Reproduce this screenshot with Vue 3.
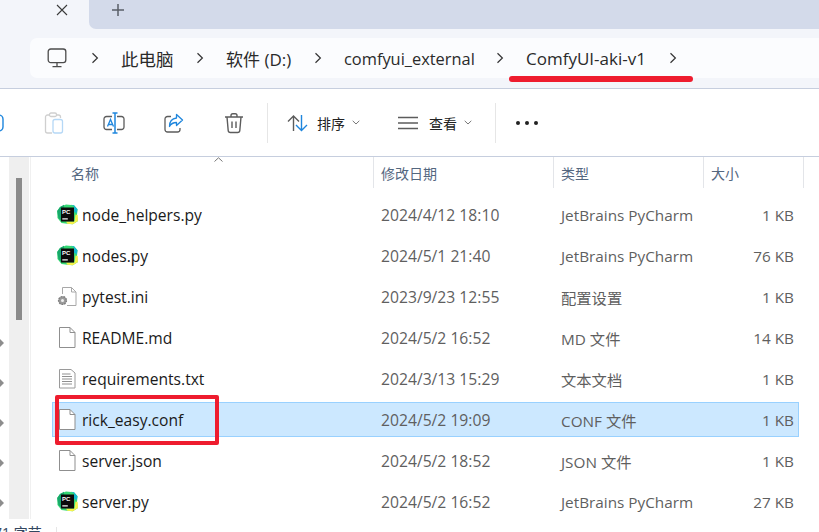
<script setup>
const crumbs = [
  { label: '此电脑', width: 105, size: 17.5 },
  { label: '软件 (D:)', width: 118, size: 17 },
  { label: 'comfyui_external', width: 182, size: 16.4 },
  { label: 'ComfyUI-aki-v1', width: 173, size: 17 },
]
const files = [
  { name: 'node_helpers.py', date: '2024/4/12 18:10', type: 'JetBrains PyCharm', size: '1 KB', icon: 'pc' },
  { name: 'nodes.py', date: '2024/5/1 21:40', type: 'JetBrains PyCharm', size: '76 KB', icon: 'pc' },
  { name: 'pytest.ini', date: '2023/9/23 12:55', type: '配置设置', size: '1 KB', icon: 'ini' },
  { name: 'README.md', date: '2024/5/2 16:52', type: 'MD 文件', size: '14 KB', icon: 'blank' },
  { name: 'requirements.txt', date: '2024/3/13 15:29', type: '文本文档', size: '1 KB', icon: 'txt' },
  { name: 'rick_easy.conf', date: '2024/5/2 19:09', type: 'CONF 文件', size: '1 KB', icon: 'blank', selected: true },
  { name: 'server.json', date: '2024/5/2 18:52', type: 'JSON 文件', size: '1 KB', icon: 'blank' },
  { name: 'server.py', date: '2024/5/2 16:52', type: 'JetBrains PyCharm', size: '27 KB', icon: 'pc' },
]
const columns = [
  { label: '名称', width: 343 },
  { label: '修改日期', width: 180 },
  { label: '类型', width: 150 },
  { label: '大小', width: 100 },
]
const arrows = [0, 1, 2, 3, 4]
</script>

<template>
  <div class="window">
    <div class="tabs">
      <div class="tab-active">
        <svg class="tab-close" width="12" height="12" viewBox="0 0 12 12"><path d="M1 1l10 10M11 1L1 11" stroke="#3a3a3a" stroke-width="1.1" fill="none" /></svg>
      </div>
      <div class="tab-strip">
        <svg class="tab-new" width="14" height="14" viewBox="0 0 14 14"><path d="M7 1v12M1 7h12" stroke="#5a5f68" stroke-width="1.5" fill="none" /></svg>
      </div>
    </div>

    <div class="address-zone">
      <div class="address">
        <svg class="pc-icon" width="20" height="20" viewBox="0 0 20 20" fill="none" stroke="#4c4c4c" stroke-width="1.3">
          <rect x="1.2" y="1" width="17.6" height="13.6" rx="2.6" />
          <path d="M10 14.6v3.6M5.5 18.6h9" />
        </svg>
        <svg class="chev first" width="8" height="12" viewBox="0 0 8 12"><path d="M1.5 1.2L6.4 6l-4.9 4.8" stroke="#333" stroke-width="1.2" fill="none" /></svg>
        <template v-for="c in crumbs" :key="c.label">
          <span class="crumb" :style="{ width: c.width + 'px' }">
            <span class="crumb-text" :style="{ fontSize: c.size + 'px' }">{{ c.label }}</span>
            <svg class="chev" width="8" height="12" viewBox="0 0 8 12"><path d="M1.5 1.2L6.4 6l-4.9 4.8" stroke="#333" stroke-width="1.2" fill="none" /></svg>
          </span>
        </template>
      </div>
    </div>

    <div class="toolbar">
      <div class="tool">
        <svg width="20" height="20" viewBox="0 0 20 20" fill="none"><rect x="3" y="2" width="16" height="16" rx="4" stroke="#1f86dd" stroke-width="1.4" /></svg>
      </div>
      <div class="tool">
        <svg width="20" height="22" viewBox="0 0 20 22" fill="none">
          <path d="M6 3H3.5A2 2 0 0 0 1.500 5v14a2 2 0 0 0 2 2H8" stroke="#cfcfcf" stroke-width="1.3" />
          <path d="M12 3h2.500a2 2 0 0 1 2 2v1" stroke="#cfcfcf" stroke-width="1.300" />
          <rect x="5.500" y="1" width="7" height="3.500" rx="1.500" stroke="#cfcfcf" stroke-width="1.300" />
          <rect x="9" y="7.500" width="9.500" height="13.500" rx="2" stroke="#b5d8f6" stroke-width="1.300" />
        </svg>
      </div>
      <div class="tool">
        <svg width="22" height="22" viewBox="0 0 22 22" fill="none">
          <path d="M9 4.500H3.500a2.500 2.500 0 0 0-2.500 2.500v8a2.500 2.500 0 0 0 2.500 2.500H9M14 4.500h4.500A2.500 2.500 0 0 1 21 7v8a2.500 2.500 0 0 1-2.500 2.500H14" stroke="#5c5c5c" stroke-width="1.300" />
          <path d="M4.500 14.500L7.500 7.500l3 7M5.500 12.500h4" stroke="#1f86dd" stroke-width="1.300" />
          <path d="M12 1v20M9.500 1h5M9.500 21h5" stroke="#1f86dd" stroke-width="1.500" />
        </svg>
      </div>
      <div class="tool">
        <svg width="20" height="20" viewBox="0 0 20 20" fill="none">
          <path d="M7 3.500H3.500A2.500 2.500 0 0 0 1 6v10.500A2.500 2.500 0 0 0 3.500 19h10a2.500 2.500 0 0 0 2.500-2.500V15" stroke="#5c5c5c" stroke-width="1.300" />
          <path d="M12.500 1.500L18.500 7l-6 5.500V9.500c-3 0-5.500 1-7 4 0-4.500 2.500-8 7-8.500z" stroke="#1f86dd" stroke-width="1.300" stroke-linejoin="round" />
        </svg>
      </div>
      <div class="tool">
        <svg width="20" height="22" viewBox="0 0 20 22" fill="none" stroke="#5c5c5c" stroke-width="1.400">
          <path d="M1 5h18M7 5V3.500A1.800 1.800 0 0 1 8.800 1.700h2.400A1.800 1.800 0 0 1 13 3.500V5" />
          <path d="M3 5l1.200 13.500a2.200 2.200 0 0 0 2.200 2h7.200a2.200 2.200 0 0 0 2.200-2L17 5" />
          <path d="M8 9.500v6.500M12 9.500v6.500" />
        </svg>
      </div>
      <div class="tool-sep"></div>
      <div class="tool-menu sort">
        <svg width="21" height="18" viewBox="0 0 21 18" fill="none" stroke-width="1.400">
          <path d="M6.500 17V2M1 7.500L6.500 2 12 7.500" stroke="#5c5c5c" />
          <path d="M14.500 1v15.500M9 11l5.500 5.500L20 11" stroke="#1f86dd" />
        </svg>
        <span class="menu-label">排序</span>
        <svg class="caret" width="8" height="5" viewBox="0 0 8 5"><path d="M.7.8L4 4 7.300.8" stroke="#777" fill="none" /></svg>
      </div>
      <div class="tool-menu view">
        <svg width="20" height="14" viewBox="0 0 20 14" fill="none" stroke="#5c5c5c" stroke-width="1.300"><path d="M0 1.500h20M0 7h20M0 12.500h20" /></svg>
        <span class="menu-label">查看</span>
        <svg class="caret" width="8" height="5" viewBox="0 0 8 5"><path d="M.7.8L4 4 7.300.8" stroke="#777" fill="none" /></svg>
      </div>
      <div class="tool-sep second"></div>
      <div class="more"><i></i><i></i><i></i></div>
    </div>

    <div class="body">
      <div class="nav">
        <div class="nav-arrows">
          <i v-for="a in arrows" :key="a"></i>
        </div>
        <div class="scrolltrack"><div class="thumb"></div></div>
      </div>
      <div class="list">
        <div class="head">
          <svg class="sort-mark" width="9" height="5" viewBox="0 0 9 5"><path d="M.5 4.500L4.500.8l4 3.700" stroke="#777" fill="none" /></svg>
          <div v-for="col in columns" :key="col.label" class="head-cell" :style="{ width: col.width + 'px' }">{{ col.label }}</div>
        </div>
        <div v-for="f in files" :key="f.name" class="row" :class="{ selected: f.selected }">
          <div class="cell-name">
            <svg v-if="f.icon === 'pc'" class="file-icon" width="21" height="21" viewBox="0 0 21 21">
              <path d="M3 3L9 .5l8 .7 3.500 4-.5 6 .7 6-5 3-5.500-.5-5.700-.7L.5 14 .2 7z" fill="#35d873" />
              <path d="M.2 7L3 3 7 .8l.5 8-3 8.500-3-3.300z" fill="#17a86b" />
              <path d="M9 17.500h8.500l1-7 2.200.5.200 6-5 3.300-5.500-.5z" fill="#f6f24a" />
              <path d="M14 .8l3 .4 3.500 4-.7 4-2.800-1.500V2.500z" fill="#14b8cf" />
              <rect x="4" y="3.500" width="13" height="14" fill="#0b0b0b" />
              <text x="5" y="10" class="pc-text">PC</text>
              <rect x="5.300" y="14.300" width="5.500" height="1.200" fill="#fff" />
            </svg>
            <svg v-else-if="f.icon === 'ini'" class="file-icon" width="21" height="21" viewBox="0 0 21 21" fill="none">
              <path d="M5.500 8V1.500h9l4.500 4.500v13.500H10" fill="#fff" stroke="#a8a8a8" />
              <path d="M14.500 1.500V6H19" stroke="#a8a8a8" />
              <circle cx="5.500" cy="14.500" r="4.200" fill="#9c9c9c" />
              <circle cx="5.500" cy="14.500" r="3.900" fill="none" stroke="#7d7d7d" stroke-width="1.400" stroke-dasharray="1.500 1.200" />
              <circle cx="5.500" cy="14.500" r="1.500" fill="#efefef" />
            </svg>
            <svg v-else-if="f.icon === 'txt'" class="file-icon" width="21" height="21" viewBox="0 0 21 21" fill="none">
              <path d="M2.500 1.500h11.500l4 3.500v15H2.500z" fill="#fff" stroke="#9a9a9a" />
              <path d="M5 6h8.500M5 8.500h10M5 11h10M5 13.500h10M5 16h10" stroke="#8f8f8f" />
            </svg>
            <svg v-else class="file-icon" width="21" height="21" viewBox="0 0 21 21" fill="none">
              <path d="M2.500 .5h10.500l5 5v15H2.500z" fill="#fff" stroke="#8f8f8f" />
              <path d="M13 .5v5h5" stroke="#8f8f8f" />
            </svg>
            <span class="name">{{ f.name }}</span>
          </div>
          <div class="cell-date">{{ f.date }}</div>
          <div class="cell-type">{{ f.type }}</div>
          <div class="cell-size">{{ f.size }}</div>
        </div>
      </div>
    </div>

    <div class="status">
      <span>71 字节</span>
      <i class="status-line"></i>
    </div>

    <div class="mark-underline"></div>
    <div class="mark-box"></div>
  </div>
</template>

<style>
html, body { margin: 0; background: #fff; overflow: hidden; }
</style>

<style scoped>
.window {
  position: relative;
  width: 819px;
  height: 532px;
  overflow: hidden;
  background: #fff;
  font-family: "Open Sans", "Noto Sans CJK SC", sans-serif;
  color: #1a1a1a;
  display: flex;
  flex-direction: column;
}

.tabs {
  height: 29px;
  display: flex;
  background: #f3f5fa;
  flex: none;
}
.tab-active {
  width: 89px;
  display: flex;
  align-items: flex-start;
  justify-content: flex-end;
  flex: none;
}
.tab-close { margin: 4px 21px 0 0; }
.tab-strip {
  flex: 1;
  background: #d3daea;
  border-bottom-left-radius: 7px;
  padding: 3px 0 0 22px;
}
.tab-new { display: block; }

.address-zone {
  flex: none;
  background: #f3f5fa;
  border-bottom: 1px solid #c6cede;
  padding: 9px 0 0 30px;
  height: 50px;
}
.address {
  height: 40px;
  background: #fbfcfe;
  border-radius: 7px 0 0 7px;
  display: flex;
  align-items: center;
  padding-left: 17px;
  color: #2a2a2a;
}
.pc-icon { flex: none; }
.chev { flex: none; }
.chev.first { margin: 0 22px 0 24px; }
.crumb {
  display: flex;
  align-items: center;
  justify-content: space-between;
  flex: none;
  padding-right: 22px;
  box-sizing: border-box;
  white-space: nowrap;
}

.toolbar {
  height: 67px;
  flex: none;
  display: flex;
  align-items: center;
  margin-left: -36px;
  border-bottom: 1px solid #c6cede;
}
.tool {
  width: 60px;
  flex: none;
  display: flex;
  justify-content: center;
  align-items: center;
}
.tool-sep {
  width: 1px;
  height: 40px;
  background: #e6e6e6;
  margin-left: 3px;
  flex: none;
}
.tool-menu {
  display: flex;
  align-items: center;
  flex: none;
}
.sort { margin-left: 19px; width: 111px; }
.view { width: 97px; }
.menu-label { font-size: 14px; margin-left: 9px; color: #222; }
.view .menu-label { margin-left: 11px; }
.caret { margin-left: 7px; }
.tool-sep.second { margin-left: 0; }
.more { display: flex; gap: 5px; margin-left: 20px; }
.more i { width: 4px; height: 4px; border-radius: 50%; background: #222; display: block; }

.body {
  flex: 1;
  display: flex;
  min-height: 0;
}
.nav {
  width: 31px;
  flex: none;
  box-sizing: border-box;
  height: 362px;
  display: flex;
  border-right: 1px solid #f0f0f0;
}
.nav-arrows {
  width: 9px;
  flex: none;
  display: flex;
  flex-direction: column;
  gap: 30px;
  padding-top: 181px;
}
.nav-arrows i {
  display: block;
  width: 0;
  height: 0;
  margin-left: -1px;
  border-left: 5px solid #8d8d8d;
  border-top: 5px solid transparent;
  border-bottom: 5px solid transparent;
}
.scrolltrack {
  width: 20px;
  background: #efefef;
  padding: 21px 7px 0;
  box-sizing: border-box;
}
.thumb { width: 6px; height: 142px; background: #8a8a8a; }

.list { flex: 1; min-width: 0; }
.head {
  position: relative;
  height: 31px;
  display: flex;
  font-size: 14px;
  color: #54677f;
}
.sort-mark { position: absolute; left: 183px; top: 0; }
.head-cell {
  box-sizing: border-box;
  flex: none;
  padding: 6px 0 0 7px;
  border-right: 1px solid #e3e5e9;
}
.head-cell:first-of-type { padding-left: 40px; }

.row {
  height: 35px;
  margin: 0 20px 6px 21px;
  display: grid;
  grid-template-columns: 328px 180px 150px 1fr;
  align-items: center;
  box-sizing: border-box;
  border: 1px solid transparent;
  font-size: 15.3px;
  color: #5f5f5f;
  white-space: nowrap;
}
.head + .row { margin-top: 9px; }
.row.selected { background: #cce8ff; border-color: #99d1ff; }
.cell-name { display: flex; align-items: center; padding-left: 4px; }
.file-icon { flex: none; }
.name { margin-left: 4px; color: #1a1a1a; font-size: 15.6px; }
.cell-date { font-size: 15.7px; }
.pc-text { font: 700 6px "Liberation Sans", sans-serif; fill: #fff; }
.cell-size { text-align: right; padding-right: 4px; }

.status {
  position: absolute;
  left: 0;
  top: 524px;
  font-size: 14px;
  line-height: 18px;
  color: #33475f;
  display: flex;
  white-space: nowrap;
  margin-left: -6px;
}
.status-line { width: 1px; height: 10px; background: #e6e6e6; margin: 3px 0 0 14px; display: block; }

.mark-underline {
  position: absolute;
  left: 509px;
  top: 76px;
  width: 184px;
  height: 6px;
  border-radius: 3px;
  background: #ee1c2e;
}
.mark-box {
  position: absolute;
  left: 55px;
  top: 395px;
  width: 164px;
  height: 50px;
  box-sizing: border-box;
  border: 4px solid #ee1c2e;
  border-radius: 2px;
}
</style>
